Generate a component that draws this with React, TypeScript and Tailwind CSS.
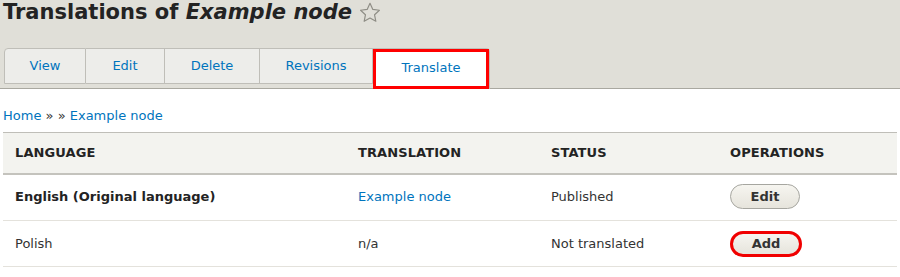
import React from "react";

const tabs = ["View", "Edit", "Delete", "Revisions"];

const rows = [
  { lang: "English (Original language)", bold: true, translation: "Example node", link: true, status: "Published", op: "Edit", h: "h-[47px]", pb: "pb-[2px]" },
  { lang: "Polish", bold: false, translation: "n/a", link: false, status: "Not translated", op: "Add", h: "h-[46px]", pb: "pb-0" },
];

function Star() {
  return (
    <svg width="22" height="21" viewBox="0 0 24 23" className="ml-[7px] mt-[2px]">
      <path
        d="M12 1.5l3.1 6.6 7.2.9-5.3 5 1.4 7.1L12 17.6l-6.4 3.5L7 14l-5.3-5 7.2-.9z"
        fill="none"
        stroke="#8f8e86"
        strokeWidth="1.3"
        strokeLinejoin="round"
      />
    </svg>
  );
}

export default function App() {
  return (
    <div className="w-[900px] h-[277px] bg-white font-['DejaVu_Sans',sans-serif] text-[13px] text-[#333] overflow-hidden">
      <div className="h-[89px] bg-[#e0dfd8] border-b border-[#a9a8a0] flex flex-col">
        <div className="flex items-start pl-[3px]">
          <h1 className="text-[21px] leading-[24px] font-bold text-[#232323]">
            Translations of <em>Example node</em>
          </h1>
          <Star />
        </div>
        <ul className="flex items-start pl-[4px] mt-[24px]">
          {tabs.map((t, i) => (
            <li
              key={t}
              className={
                "h-[36px] flex items-center justify-center bg-[#ededea] border border-[#bfbeb8] text-[#0074bd] " +
                (i === 0 ? "rounded-tl-[4px] " : "border-l-0 ") +
                (t === "View" ? "w-[82px]" : t === "Edit" ? "w-[79px]" : t === "Delete" ? "w-[95px]" : "w-[113px]")
              }
            >
              <span>{t}</span>
            </li>
          ))}
          <li className="h-[41px] w-[117px] border-t border-r border-[#bfbeb8] rounded-tr-[4px] bg-white">
            <div className="h-full border-[3px] border-[#ff0000] pb-[2px] flex items-center justify-center text-[#0074bd]">
              Translate
            </div>
          </li>
        </ul>
      </div>

      <div className="pl-[3px] pt-[19px] leading-[16px] text-[#0074bd]">
        Home <span className="text-[#333]">»</span> <span className="text-[#333]">»</span> Example node
      </div>

      <table className="ml-[3px] mt-[8px] w-[894px] border-collapse table-fixed">
        <colgroup>
          <col className="w-[343px]" />
          <col className="w-[193px]" />
          <col className="w-[179px]" />
          <col className="w-[179px]" />
        </colgroup>
        <thead>
          <tr className="bg-[#f3f3ef] border-t border-[#bfbeb8] border-b-2 border-b-[#c4c3bd] h-[41px]">
            {["Language", "Translation", "Status", "Operations"].map((h) => (
              <th key={h} className="text-left pl-[12px] uppercase font-bold text-[#232323] tracking-[0.1px]">
                {h}
              </th>
            ))}
          </tr>
        </thead>
        <tbody>
          {rows.map((r) => (
            <tr key={r.lang} className={"border-b border-[#e4e2dc] " + r.h}>
              <td className={"pl-[12px] " + r.pb + " " + (r.bold ? "font-bold text-[#232323]" : "")}>{r.lang}</td>
              <td className={"pl-[12px] " + r.pb + " " + (r.link ? "text-[#0074bd]" : "")}>{r.translation}</td>
              <td className={"pl-[12px] " + r.pb}>{r.status}</td>
              <td className={"pl-[12px] " + r.pb}>
                {r.op === "Edit" ? (
                  <button className="h-[25px] w-[70px] rounded-full border border-[#a6a6a0] bg-gradient-to-b from-[#f6f5f0] to-[#e6e4dc] font-bold text-[#333] leading-none">
                    Edit
                  </button>
                ) : (
                  <button className="h-[26px] w-[72px] rounded-full border-[3px] border-[#f00000] bg-gradient-to-b from-[#f6f5f0] to-[#e6e4dc] font-bold text-[#333] leading-none">
                    Add
                  </button>
                )}
              </td>
            </tr>
          ))}
        </tbody>
      </table>
    </div>
  );
}
